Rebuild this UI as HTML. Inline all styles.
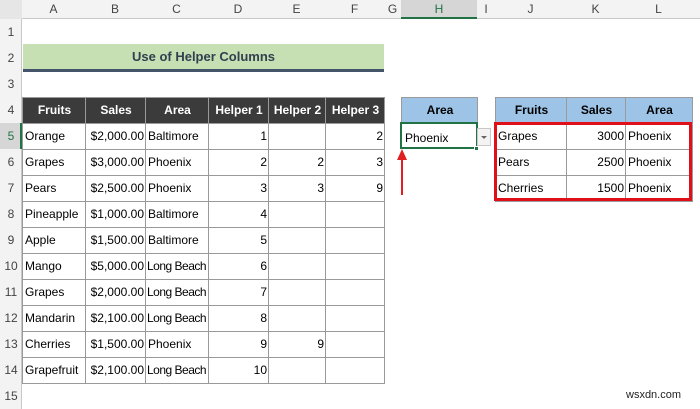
<!DOCTYPE html>
<html><head><meta charset="utf-8"><style>
*{margin:0;padding:0;box-sizing:border-box}
body{width:700px;height:409px;overflow:hidden;background:#fff;font-family:"Liberation Sans",Arial,sans-serif;font-size:12px;color:#000;position:relative}
.a{position:absolute}
table{border-collapse:collapse;table-layout:fixed;position:absolute}
td{overflow:hidden;white-space:nowrap;padding:0 1px 0 2px;height:26px;line-height:25px}
.t td{border:1px solid #9a9a9a}
.r{text-align:right}
.hd td{font-weight:bold;text-align:center}
.lb{letter-spacing:-0.5px;padding-left:1px}
</style></head><body>
<div class="a" style="left:0;top:0;width:700px;height:19px;background:#f3f3f3;border-bottom:1px solid #c8c8c8"></div>
<div class="a" style="left:0;top:0;width:22px;height:19px;background:#e6e6e6"></div>
<div class="a" style="left:0;top:19px;width:22px;height:390px;background:#f3f3f3;border-right:1px solid #c8c8c8"></div>
<div class="a" style="left:401px;top:0;width:76px;height:19px;background:#d6d6d6;border-bottom:2px solid #217346"></div>
<div class="a" style="left:0;top:123px;width:22px;height:26px;background:#d6d6d6;border-right:2px solid #217346"></div>
<div class="a" style="top:0;left:0;width:700px;height:19px;color:#444;font-size:12px;line-height:19px">
<span class="a" style="left:22px;width:63px;text-align:center">A</span>
<span class="a" style="left:85px;width:60px;text-align:center">B</span>
<span class="a" style="left:145px;width:63px;text-align:center">C</span>
<span class="a" style="left:208px;width:60px;text-align:center">D</span>
<span class="a" style="left:268px;width:57px;text-align:center">E</span>
<span class="a" style="left:325px;width:59px;text-align:center">F</span>
<span class="a" style="left:384px;width:17px;text-align:center">G</span>
<span class="a" style="left:401px;width:76px;text-align:center;color:#217346">H</span>
<span class="a" style="left:477px;width:18px;text-align:center">I</span>
<span class="a" style="left:495px;width:71px;text-align:center">J</span>
<span class="a" style="left:566px;width:59px;text-align:center">K</span>
<span class="a" style="left:625px;width:67px;text-align:center">L</span>
</div>
<div class="a" style="left:0;top:19px;width:22px;color:#444;font-size:12px;text-align:center;line-height:26px">
<div style="height:26px">1</div><div style="height:26px">2</div><div style="height:26px">3</div><div style="height:26px">4</div><div style="height:26px;color:#217346">5</div><div style="height:26px">6</div><div style="height:26px">7</div><div style="height:26px">8</div><div style="height:26px">9</div><div style="height:26px">10</div><div style="height:26px">11</div><div style="height:26px">12</div><div style="height:26px">13</div><div style="height:26px">14</div><div style="height:26px">15</div>
</div>
<div class="a" style="left:23px;top:44px;width:361px;height:25px;background:#c6e0b4;text-align:center;font-weight:bold;font-size:13px;line-height:25px;color:#333f4f">Use of Helper Columns</div>
<div class="a" style="left:23px;top:69px;width:361px;height:3px;background:#44546a"></div>
<table class="t" style="left:22px;top:97px;width:362px">
<colgroup><col style="width:63px"><col style="width:60px"><col style="width:63px"><col style="width:60px"><col style="width:57px"><col style="width:59px"></colgroup>
<tr class="hd" style="background:#3b3b3b;color:#fff"><td>Fruits</td><td>Sales</td><td>Area</td><td>Helper 1</td><td>Helper 2</td><td>Helper 3</td></tr>
<tr><td>Orange</td><td class="r">$2,000.00</td><td>Baltimore</td><td class="r">1</td><td></td><td class="r">2</td></tr>
<tr><td>Grapes</td><td class="r">$3,000.00</td><td>Phoenix</td><td class="r">2</td><td class="r">2</td><td class="r">3</td></tr>
<tr><td>Pears</td><td class="r">$2,500.00</td><td>Phoenix</td><td class="r">3</td><td class="r">3</td><td class="r">9</td></tr>
<tr><td>Pineapple</td><td class="r">$1,000.00</td><td>Baltimore</td><td class="r">4</td><td></td><td></td></tr>
<tr><td>Apple</td><td class="r">$1,500.00</td><td>Baltimore</td><td class="r">5</td><td></td><td></td></tr>
<tr><td>Mango</td><td class="r">$5,000.00</td><td class="lb">Long Beach</td><td class="r">6</td><td></td><td></td></tr>
<tr><td>Grapes</td><td class="r">$2,000.00</td><td class="lb">Long Beach</td><td class="r">7</td><td></td><td></td></tr>
<tr><td>Mandarin</td><td class="r">$2,100.00</td><td class="lb">Long Beach</td><td class="r">8</td><td></td><td></td></tr>
<tr><td>Cherries</td><td class="r">$1,500.00</td><td>Phoenix</td><td class="r">9</td><td class="r">9</td><td></td></tr>
<tr><td>Grapefruit</td><td class="r">$2,100.00</td><td class="lb">Long Beach</td><td class="r">10</td><td></td><td></td></tr>
</table>
<table class="t" style="left:401px;top:97px;width:76px">
<colgroup><col style="width:76px"></colgroup>
<tr class="hd" style="background:#9dc3e6"><td>Area</td></tr>
</table>
<div class="a" style="left:400px;top:122px;width:78px;height:27px;border:2px solid #217346;padding:3px 0 0 3px;line-height:22px">Phoenix</div>
<div class="a" style="left:474px;top:146px;width:5px;height:5px;background:#217346;border:1px solid #fff"></div>
<div class="a" style="left:477px;top:128px;width:14px;height:18px;background:#f3f3f3;border:1px solid #c8c8c8"></div>
<div class="a" style="left:481px;top:136px;width:0;height:0;border-left:3px solid transparent;border-right:3px solid transparent;border-top:3px solid #666"></div>
<div class="a" style="left:401px;top:158px;width:2px;height:37px;background:#e02020"></div>
<div class="a" style="left:397px;top:149px;width:0;height:0;border-left:5px solid transparent;border-right:5px solid transparent;border-bottom:11px solid #e02020"></div>
<table class="t" style="left:495px;top:97px;width:197px">
<colgroup><col style="width:71px"><col style="width:59px"><col style="width:67px"></colgroup>
<tr class="hd" style="background:#9dc3e6"><td>Fruits</td><td>Sales</td><td>Area</td></tr>
<tr><td>Grapes</td><td class="r">3000</td><td>Phoenix</td></tr>
<tr><td>Pears</td><td class="r">2500</td><td>Phoenix</td></tr>
<tr><td>Cherries</td><td class="r">1500</td><td>Phoenix</td></tr>
</table>
<div class="a" style="left:494px;top:122px;width:198px;height:79px;border:3px solid #e0101a"></div>
<div class="a" style="left:626px;top:389px;font-size:11px;color:#222">wsxdn.com</div>
</body></html>
